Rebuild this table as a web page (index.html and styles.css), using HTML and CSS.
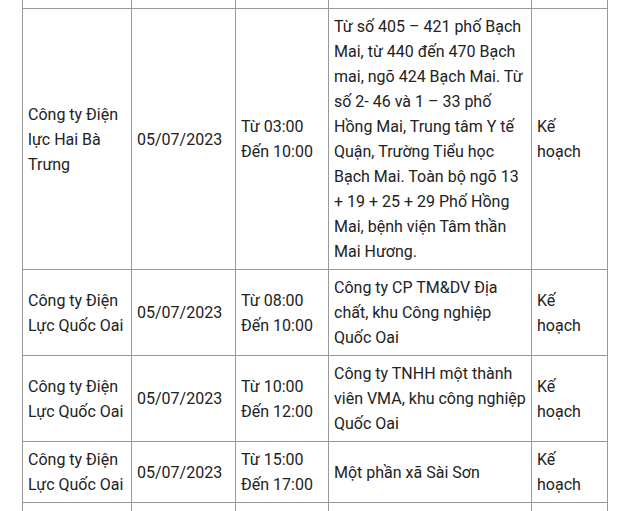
FILE: index.html
```html
<!DOCTYPE html>
<html lang="vi">
<head>
<meta charset="utf-8">
<link rel="stylesheet" href="styles.css">
</head>
<body>
<div class="page">
<table class="schedule">
  <colgroup>
    <col class="c-unit"><col class="c-date"><col class="c-time"><col class="c-area"><col class="c-note">
  </colgroup>
  <tr class="cut"><td></td><td></td><td></td><td></td><td></td></tr>
  <tr>
    <td>Công ty Điện lực Hai Bà Trưng</td>
    <td>05/07/2023</td>
    <td>Từ 03:00<br>Đến 10:00</td>
    <td>Từ số 405 – 421 phố Bạch Mai, từ 440 đến 470 Bạch mai, ngõ 424 Bạch Mai. Từ số 2- 46 và 1 – 33 phố Hồng Mai, Trung tâm Y tế Quận, Trường Tiểu học Bạch Mai. Toàn bộ ngõ 13 + 19 + 25 + 29 Phố Hồng Mai, bệnh viện Tâm thần Mai Hương.</td>
    <td>Kế hoạch</td>
  </tr>
  <tr>
    <td>Công ty Điện Lực Quốc Oai</td>
    <td>05/07/2023</td>
    <td>Từ 08:00<br>Đến 10:00</td>
    <td>Công ty CP TM&amp;DV Địa chất, khu Công nghiệp Quốc Oai</td>
    <td>Kế hoạch</td>
  </tr>
  <tr>
    <td>Công ty Điện Lực Quốc Oai</td>
    <td>05/07/2023</td>
    <td>Từ 10:00<br>Đến 12:00</td>
    <td>Công ty TNHH một thành viên VMA, khu công nghiệp Quốc Oai</td>
    <td>Kế hoạch</td>
  </tr>
  <tr>
    <td>Công ty Điện Lực Quốc Oai</td>
    <td>05/07/2023</td>
    <td>Từ 15:00<br>Đến 17:00</td>
    <td>Một phần xã Sài Sơn</td>
    <td>Kế hoạch</td>
  </tr>
  <tr class="tail"><td></td><td></td><td></td><td></td><td></td></tr>
</table>
</div>
</body>
</html>
```

FILE: styles.css
```css
html, body {
  margin: 0;
  padding: 0;
  background: #ffffff;
}
.page {
  padding-left: 22px;
  height: 511px;
  overflow: hidden;
}
.schedule {
  border-collapse: collapse;
  table-layout: fixed;
  width: 585px;
  font-family: Roboto, "Noto Sans", sans-serif;
  font-size: 16px;
  line-height: 25px;
  color: #222222;
}
.c-unit { width: 109px; }
.c-date { width: 104px; }
.c-time { width: 93px; }
.c-area { width: 203px; }
.c-note { width: 76px; }
.schedule td {
  border: 1px solid #999999;
  padding: 5px 5px;
  vertical-align: middle;
  text-align: left;
}
.schedule tr.cut td {
  border-top: none;
  padding: 0;
  height: 8px;
}
.schedule tr.tail td {
  border-bottom: none;
  padding: 0;
  height: 60px;
}
```
